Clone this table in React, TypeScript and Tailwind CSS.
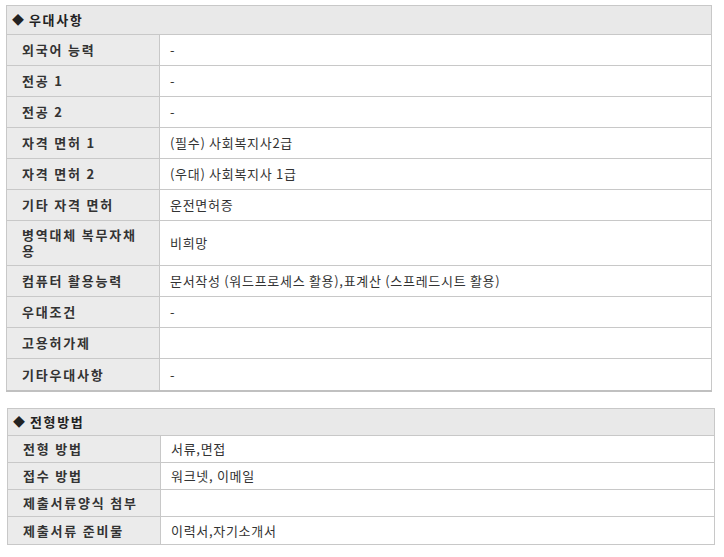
const prefRows: [string, string][] = [
  ["외국어 능력", "-"],
  ["전공 1", "-"],
  ["전공 2", "-"],
  ["자격 면허 1", "(필수) 사회복지사2급"],
  ["자격 면허 2", "(우대) 사회복지사 1급"],
  ["기타 자격 면허", "운전면허증"],
  ["병역대체 복무자채용", "비희망"],
  ["컴퓨터 활용능력", "문서작성 (워드프로세스 활용),표계산 (스프레드시트 활용)"],
  ["우대조건", "-"],
  ["고용허가제", ""],
  ["기타우대사항", "-"],
];

const selectRows: [string, string][] = [
  ["전형 방법", "서류,면접"],
  ["접수 방법", "워크넷, 이메일"],
  ["제출서류양식 첨부", ""],
  ["제출서류 준비물", "이력서,자기소개서"],
];

const font = "font-['Noto_Sans_CJK_KR','Noto_Sans',sans-serif]";

function Section({
  title,
  rows,
  header,
  row,
  cellPad,
}: {
  title: string;
  rows: [string, string][];
  header: string;
  row: string;
  cellPad: string;
}) {
  return (
    <div className="border-l border-r border-t border-[#c8c8c8]">
      <div
        className={`flex items-center border-b border-[#c8c8c8] bg-[#e9e9e9] pl-[5px] text-[13px] font-bold tracking-[1.6px] text-[#222] ${header}`}
      >
        <span className="mr-[5px] text-[12px] tracking-normal">◆</span>
        {title}
      </div>
      {rows.map(([label, value], i) => (
        <div
          key={i}
          className={`grid grid-cols-[153px_1fr] border-b border-[#c8c8c8] last:border-b-0 ${row}`}
        >
          <div
            className={`flex items-center border-r border-[#c8c8c8] bg-[#ebebeb] pl-[15px] pr-[18px] text-[13px] font-bold leading-[16px] tracking-[1.8px] text-[#333] ${cellPad}`}
          >
            {label}
          </div>
          <div className="flex items-center pl-[10px] text-[13px] tracking-[0.7px] text-[#333]">{value}</div>
        </div>
      ))}
    </div>
  );
}

export default function App() {
  return (
    <div className={`min-h-[557px] w-[724px] bg-white pt-[5px] ${font}`}>
      <div className="ml-[6px] w-[706px] border-b-2 border-[#c0c0c0]">
        <Section
          title="우대사항"
          rows={prefRows}
          header="h-[29px]"
          row="min-h-[31px]"
          cellPad="py-[6px]"
        />
      </div>
      <div className="ml-[7px] mt-[16px] w-[708px] border-b border-[#c8c8c8]">
        <Section
          title="전형방법"
          rows={selectRows}
          header="h-[27px]"
          row="min-h-[27px]"
          cellPad="py-[4px]"
        />
      </div>
    </div>
  );
}
